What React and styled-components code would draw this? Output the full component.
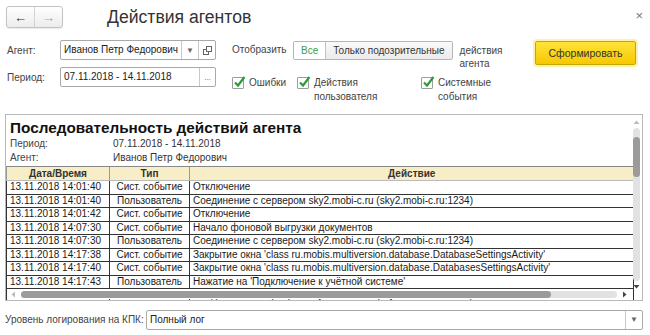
import React from "react";
import styled, { createGlobalStyle } from "styled-components";

const Global = createGlobalStyle`
  html, body { margin: 0; padding: 0; background: #fff; }
  body {
    font-family: "Liberation Sans", Arial, sans-serif;
    font-size: 10px;
    color: #333;
  }
`;

const Window = styled.div`
  width: 650px;
  height: 335px;
  overflow: hidden;
  background: #fff;
  display: flex;
  flex-direction: column;
`;

const Header = styled.div`
  height: 34px;
  box-sizing: border-box;
  padding: 6px 7px 0 6px;
  display: flex;
  align-items: flex-start;
`;

const NavGroup = styled.div`
  display: flex;
  height: 22px;
  border: 1px solid #c3c3c3;
  border-radius: 3px;
  box-sizing: border-box;
  background: linear-gradient(#ffffff, #ececec);
  box-shadow: 0 1px 1px rgba(0, 0, 0, 0.08);
`;

const NavButton = styled.div`
  width: 27px;
  display: flex;
  align-items: center;
  justify-content: center;
  color: ${(p) => (p.disabled ? "#a8a8a8" : "#333")};
  font-size: 13px;
  & + & { border-left: 1px solid #d3d3d3; }
`;

const Title = styled.div`
  margin-left: 44px;
  font-size: 17.6px;
  line-height: 22px;
  color: #333;
`;

const Close = styled.div`
  margin-left: auto;
  margin-top: 2px;
  font-size: 13px;
  color: #777;
`;

const Form = styled.div`
  display: flex;
  padding: 6px 14px 0 7px;
  height: 73px;
  box-sizing: border-box;
`;

const LeftCol = styled.div`
  display: flex;
  flex-direction: column;
  gap: 7px;
  width: 209px;
`;

const FieldRow = styled.div`
  display: flex;
  align-items: center;
  height: 20px;
`;

const Label = styled.div`
  width: ${(p) => p.w || 53}px;
  flex-shrink: 0;
  color: #444;
`;

const Input = styled.div`
  flex: 1;
  height: 20px;
  box-sizing: border-box;
  border: 1px solid #a9a9a9;
  border-radius: 2px;
  display: flex;
  background: #fff;
`;

const InputText = styled.div`
  flex: 1;
  padding-left: 3px;
  line-height: 18px;
  color: #222;
  white-space: nowrap;
  overflow: hidden;
`;

const InputBtn = styled.div`
  width: ${(p) => p.w || 16}px;
  border-left: 1px solid #c8c8c8;
  display: flex;
  align-items: center;
  justify-content: center;
  color: #666;
  font-size: 8px;
`;

const MiddleCol = styled.div`
  margin-left: 16px;
  display: flex;
  flex-direction: column;
`;

const ShowRow = styled.div`
  display: flex;
  align-items: flex-start;
`;

const ShowLabel = styled.div`
  width: 61px;
  line-height: 20px;
  color: #444;
`;

const Toggle = styled.div`
  display: flex;
  height: 19px;
  margin-top: 1px;
  border: 1px solid #b5b5b5;
  border-radius: 2px;
  box-sizing: border-box;
  overflow: hidden;
`;

const ToggleItem = styled.div`
  padding: 0 ${(p) => p.pad}px;
  line-height: 17px;
  color: ${(p) => (p.active ? "#3e9a4a" : "#333")};
  background: ${(p) => (p.active ? "#fff" : "linear-gradient(#fafafa, #ebebeb)")};
  & + & { border-left: 1px solid #c3c3c3; }
`;

const Note = styled.div`
  margin-left: 7px;
  margin-top: 4px;
  line-height: 13px;
  color: #444;
`;

const Checks = styled.div`
  display: flex;
  margin-top: 6px;
`;

const CheckItem = styled.div`
  width: ${(p) => p.w}px;
  display: flex;
  align-items: flex-start;
  gap: 5px;
`;

const Box = styled.div`
  width: 12px;
  height: 12px;
  flex-shrink: 0;
  margin-top: 1px;
  border: 1px solid #9c9c9c;
  border-radius: 1px;
  background: #fff;
  box-sizing: border-box;
  position: relative;
  svg { position: absolute; left: 0px; top: -3px; }
`;

const CheckText = styled.div`
  line-height: 14px;
  color: #444;
`;

const FormButton = styled.div`
  margin-left: auto;
  margin-top: 1px;
  width: 101px;
  height: 24px;
  box-sizing: border-box;
  border: 1px solid #c8a600;
  border-radius: 2px;
  background: linear-gradient(#ffe33a, #f6c800);
  box-shadow: 0 0 0 2px #fff0a8;
  display: flex;
  align-items: center;
  justify-content: center;
  color: #333;
  font-size: 10.5px;
`;

const Panel = styled.div`
  margin: 7px 7px 0 5px;
  height: 187px;
  box-sizing: border-box;
  border: 1px solid #b9b9b9;
  position: relative;
  overflow: hidden;
`;

const ReportHead = styled.div`
  padding: 3px 0 2px 4px;
`;

const ReportTitle = styled.div`
  font-size: 15.3px;
  font-weight: bold;
  line-height: 19px;
  color: #111;
`;

const MetaRow = styled.div`
  display: flex;
  line-height: 13.5px;
  color: #333;
`;

const Table = styled.table`
  border-collapse: collapse;
  width: 628px;
  table-layout: fixed;
  font-size: 10px;
  color: #1a1a1a;
`;

const Th = styled.th`
  height: 13px;
  padding: 0;
  background: #f7eec8;
  border-top: 1px solid #888;
  border-bottom: 1px solid #bbb;
  border-left: 1px solid #999;
  font-weight: bold;
  text-align: center;
  line-height: 12px;
  color: #333;
`;

const Td = styled.td`
  height: 12.5px;
  padding: 0 3px;
  border: 1px solid #333;
  line-height: 12px;
  text-align: ${(p) => p.align || "left"};
  white-space: nowrap;
  overflow: hidden;
`;

const VScroll = styled.div`
  position: absolute;
  right: 2px;
  top: 4px;
  bottom: 10px;
  width: 7px;
  display: flex;
  flex-direction: column;
  align-items: center;
`;

const ArrowBox = styled.div`
  width: 7px;
  height: 7px;
  display: flex;
  align-items: center;
  justify-content: center;
`;

const VTrack = styled.div`
  flex: 1;
  width: 7px;
  margin: 2px 0;
  border-radius: 4px;
  background: #e2e2e2;
  display: flex;
  flex-direction: column;
`;

const VThumb = styled.div`
  height: 40px;
  margin-top: 9px;
  border-radius: 4px;
  background: #9b9b9b;
`;

const HScroll = styled.div`
  position: absolute;
  left: 4px;
  right: 14px;
  bottom: 1px;
  height: 10px;
  display: flex;
  align-items: center;
  background: #fff;
`;

const HTrack = styled.div`
  flex: 1;
  height: 7px;
  margin: 0 4px;
  border-radius: 4px;
  background: #e2e2e2;
  display: flex;
`;

const HThumb = styled.div`
  width: 89%;
  border-radius: 4px;
  background: #9b9b9b;
`;

const LogRow = styled.div`
  display: flex;
  align-items: center;
  margin: 9px 7px 0 5px;
  height: 19px;
`;

const Check = () => (
  <svg width="13" height="13" viewBox="0 0 13 13">
    <path d="M2 7.5 L5 10.5 L11.5 2" fill="none" stroke="#2f9a3c" strokeWidth="2.2" />
  </svg>
);

const arrowPaths = {
  up: "M0.5 5 L3.5 1.5 L6.5 5 Z",
  down: "M0.5 2 L3.5 5.5 L6.5 2 Z",
  left: "M5 0.5 L1.5 3.5 L5 6.5 Z",
  right: "M2 0.5 L5.5 3.5 L2 6.5 Z",
};

const Arrow = ({ dir, color }) => (
  <ArrowBox>
    <svg width="7" height="7" viewBox="0 0 7 7">
      <path d={arrowPaths[dir]} fill={color} />
    </svg>
  </ArrowBox>
);

const rows = [
  ["13.11.2018 14:01:40", "Сист. событие", "Отключение"],
  ["13.11.2018 14:01:40", "Пользователь", "Соединение с сервером sky2.mobi-c.ru (sky2.mobi-c.ru:1234)"],
  ["13.11.2018 14:01:42", "Сист. событие", "Отключение"],
  ["13.11.2018 14:07:30", "Сист. событие", "Начало фоновой выгрузки документов"],
  ["13.11.2018 14:07:30", "Пользователь", "Соединение с сервером sky2.mobi-c.ru (sky2.mobi-c.ru:1234)"],
  ["13.11.2018 14:17:38", "Сист. событие", "Закрытие окна 'class ru.mobis.multiversion.database.DatabaseSettingsActivity'"],
  ["13.11.2018 14:17:40", "Сист. событие", "Закрытие окна 'class ru.mobis.multiversion.database.DatabasesSettingsActivity'"],
  ["13.11.2018 14:17:43", "Пользователь", "Нажатие на 'Подключение к учётной системе'"],
  ["13.11.2018 14:17:45", "Пользователь", "Соединение с сервером sky2.mobi-c.ru (sky2.mobi-c.ru:1234)"],
];

export default function App() {
  return (
    <Window>
      <Global />
      <Header>
        <NavGroup>
          <NavButton>&#8592;</NavButton>
          <NavButton disabled>&#8594;</NavButton>
        </NavGroup>
        <Title>Действия агентов</Title>
        <Close>&#215;</Close>
      </Header>

      <Form>
        <LeftCol>
          <FieldRow>
            <Label>Агент:</Label>
            <Input>
              <InputText>Иванов Петр Федорович</InputText>
              <InputBtn>&#9660;</InputBtn>
              <InputBtn>
                <svg width="9" height="9" viewBox="0 0 9 9">
                  <rect x="0.5" y="3.5" width="5" height="5" fill="#fff" stroke="#666" />
                  <rect x="3.5" y="0.5" width="5" height="5" fill="#fff" stroke="#666" />
                </svg>
              </InputBtn>
            </Input>
          </FieldRow>
          <FieldRow>
            <Label>Период:</Label>
            <Input>
              <InputText>07.11.2018 - 14.11.2018</InputText>
              <InputBtn w={15}>...</InputBtn>
            </Input>
          </FieldRow>
        </LeftCol>

        <MiddleCol>
          <ShowRow>
            <ShowLabel>Отобразить</ShowLabel>
            <Toggle>
              <ToggleItem active pad={7}>Все</ToggleItem>
              <ToggleItem pad={7}>Только подозрительные</ToggleItem>
            </Toggle>
            <Note>
              действия
              <br />
              агента
            </Note>
          </ShowRow>
          <Checks>
            <CheckItem w={65}>
              <Box><Check /></Box>
              <CheckText>Ошибки</CheckText>
            </CheckItem>
            <CheckItem w={124}>
              <Box><Check /></Box>
              <CheckText>
                Действия
                <br />
                пользователя
              </CheckText>
            </CheckItem>
            <CheckItem w={80}>
              <Box><Check /></Box>
              <CheckText>
                Системные
                <br />
                события
              </CheckText>
            </CheckItem>
          </Checks>
        </MiddleCol>

        <FormButton>Сформировать</FormButton>
      </Form>

      <Panel>
        <ReportHead>
          <ReportTitle>Последовательность действий агента</ReportTitle>
          <MetaRow>
            <Label w={103}>Период:</Label>
            <span>07.11.2018 - 14.11.2018</span>
          </MetaRow>
          <MetaRow>
            <Label w={103}>Агент:</Label>
            <span>Иванов Петр Федорович</span>
          </MetaRow>
        </ReportHead>
        <Table>
          <colgroup>
            <col style={{ width: 103 }} />
            <col style={{ width: 80 }} />
            <col />
          </colgroup>
          <thead>
            <tr>
              <Th>Дата/Время</Th>
              <Th>Тип</Th>
              <Th>Действие</Th>
            </tr>
          </thead>
          <tbody>
            {rows.map((r, i) => (
              <tr key={i}>
                <Td>{r[0]}</Td>
                <Td align="center">{r[1]}</Td>
                <Td>{r[2]}</Td>
              </tr>
            ))}
          </tbody>
        </Table>
        <VScroll>
          <Arrow dir="up" color="#bbb" />
          <VTrack>
            <VThumb />
          </VTrack>
          <Arrow dir="down" color="#444" />
        </VScroll>
        <HScroll>
          <Arrow dir="left" color="#bbb" />
          <HTrack>
            <HThumb />
          </HTrack>
          <Arrow dir="right" color="#444" />
        </HScroll>
      </Panel>

      <LogRow>
        <Label w={141}>Уровень логирования на КПК:</Label>
        <Input>
          <InputText>Полный лог</InputText>
          <InputBtn>&#9660;</InputBtn>
        </Input>
      </LogRow>
    </Window>
  );
}
